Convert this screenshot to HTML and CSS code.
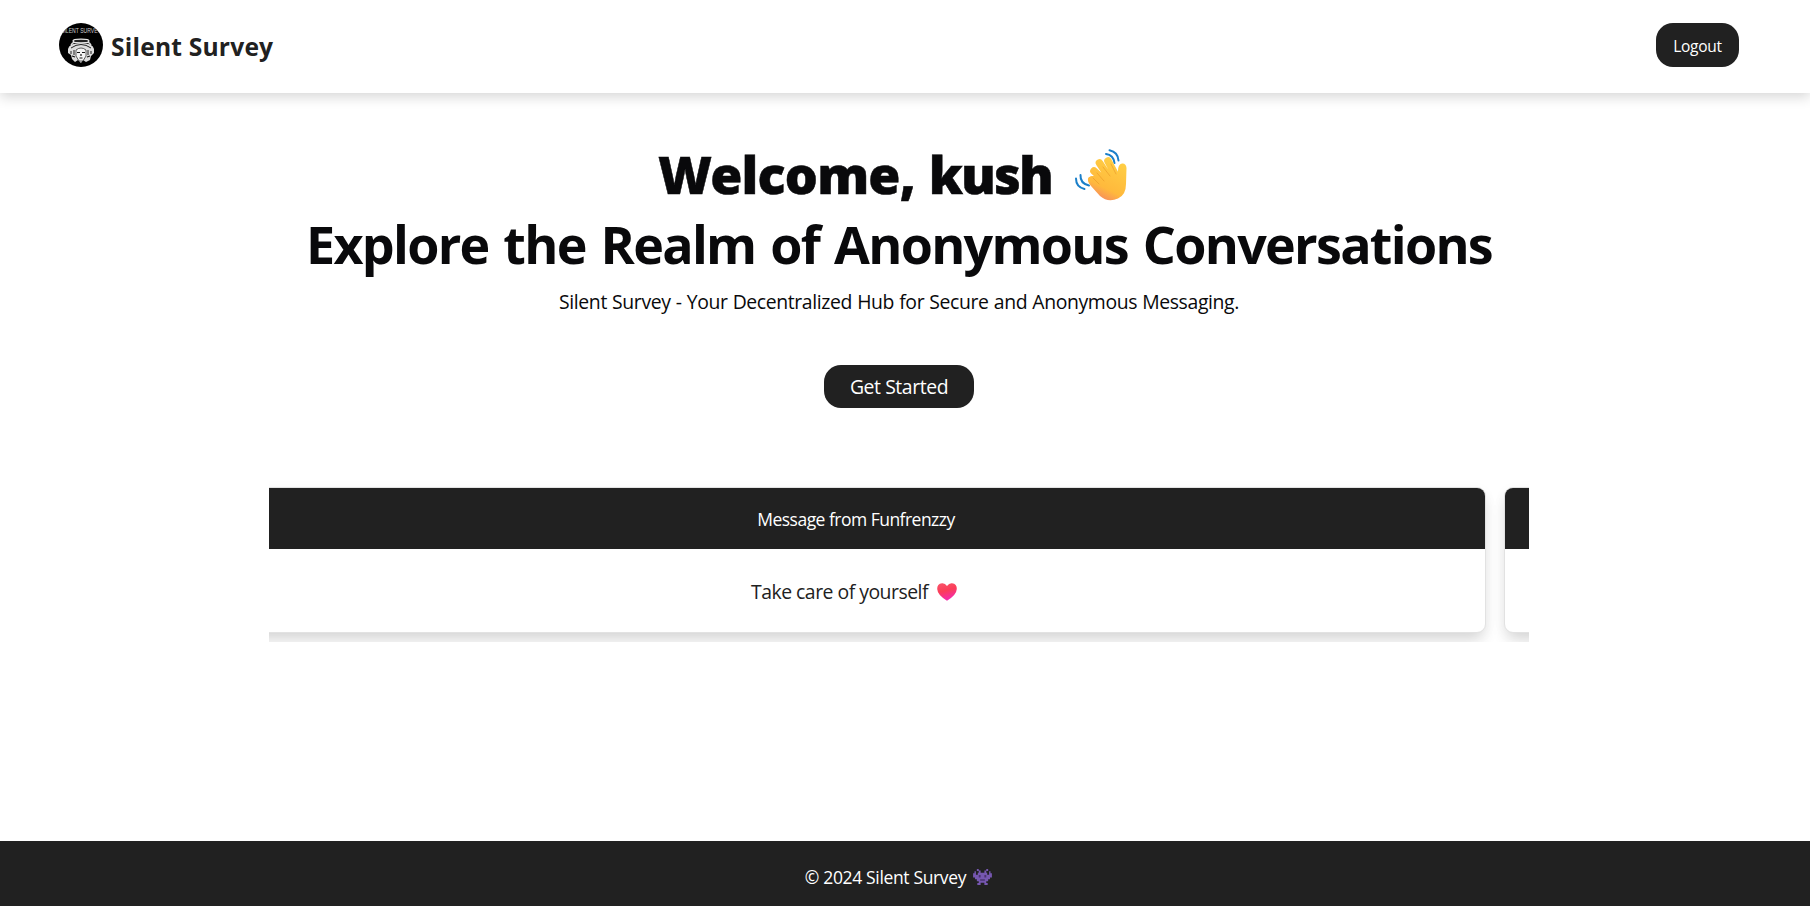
FILE: index.html
```html
<!DOCTYPE html>
<html lang="en">
<head>
<meta charset="utf-8">
<title>Silent Survey</title>
<link rel="stylesheet" href="styles.css">
</head>
<body>
<header class="navbar">
  <a class="brand">
    <svg class="logo" viewBox="0 0 44 44">
      <defs><clipPath id="disc"><circle cx="22" cy="22" r="22"/></clipPath></defs>
      <g clip-path="url(#disc)">
        <rect width="44" height="44" fill="#000"/>
        <text class="logo-text" x="2" y="9.500" textLength="40" lengthAdjust="spacingAndGlyphs">SILENT SURVEY</text>
        <path d="M12 22Q14 18 22 18T32 22" fill="none" stroke="#ddd" stroke-width="1.400"/>
        <ellipse cx="22" cy="18" rx="8" ry="1.800" fill="#222" stroke="#eee" stroke-width="1.200"/>
        <path d="M9 26Q10 20 22 20T35 26L35 30 32 33 31 37 27 39 24 37 22 40 19 37 16 39 13 36 12 32 9 30Z" fill="#ddd"/>
        <path d="M12 25Q22 18 32 25M12 28V31M32 28V31M15 27V32M29 27V32" fill="none" stroke="#222" stroke-width="1"/>
        <path d="M17 27Q22 23 27 27L27 33 24 38H20L17 33Z" fill="#f4f4f4" stroke="#222" stroke-width=".7"/>
        <path d="M18 29.500H21M23 29.500H26M20.500 35H23.500M22 31V33M13 33 16 34M31 33 28 34" stroke="#111" stroke-width="1.200"/>
      </g>
    </svg>
    <span class="brand-name">Silent Survey</span>
  </a>
  <button class="btn btn-logout">Logout</button>
</header>
<main class="main">
  <h1 class="welcome"><span class="welcome-text">Welcome, <span class="user">kush</span></span>
    <svg class="wave" viewBox="0 0 52 52">
      <defs><linearGradient id="hand" gradientUnits="userSpaceOnUse" x1="42" y1="10" x2="22" y2="50"><stop offset="0" stop-color="#ffcf45"/><stop offset=".7" stop-color="#ffb93c"/><stop offset="1" stop-color="#f68762"/></linearGradient></defs>
      <g fill="none" stroke="#1b7fc9" stroke-width="2" stroke-linecap="round"><path d="M34.500 1.200Q43 3 43.500 11.500M31 5Q38.500 6 39.500 14M5.500 26Q5 34.500 14 36.500M1 29.500Q1 38 9.500 40"/></g>
      <g fill="none" stroke="url(#hand)" stroke-width="7.600" stroke-linecap="round"><path d="M17 31 28 40M19 22 32 34M24.500 14 35 30M33 12 41 27"/></g>
      <path d="M14 28Q11 31 16 37L25 47Q33 54 43 49.500Q51 46 51 35L51.500 19Q51 14 47 14.500Q43 15 43 22Q43 26 41 26L28 25Z" fill="url(#hand)"/>
      <path d="M18 29 24 35M22 24 29 32M28 18 35 27M36 15 41 25" fill="none" stroke="#e99a28" stroke-width="1" opacity=".65" stroke-linecap="round"/>
    </svg>
  </h1>
  <h2 class="headline">Explore the Realm of Anonymous Conversations</h2>
  <p class="tagline">Silent Survey - Your Decentralized Hub for Secure and Anonymous Messaging.</p>
  <button class="btn btn-start">Get Started</button>
  <section class="carousel">
    <div class="track">
      <article class="card">
        <div class="card-head"><span>Message from Funfrenzzy</span></div>
        <div class="card-body"><span>Take care of yourself</span>
          <svg class="heart" viewBox="0 0 20 18"><defs><linearGradient id="love" x1="0" y1="0" x2=".3" y2="1"><stop offset="0" stop-color="#f9566b"/><stop offset=".5" stop-color="#fb3d58"/><stop offset="1" stop-color="#f52bab"/></linearGradient></defs><path d="M10 3Q12 0 15 .3Q20 1 19.800 6Q19.500 12 10 17.700Q.5 12 .2 6Q0 1 5 .3Q8 0 10 3Z" fill="url(#love)"/></svg>
        </div>
      </article>
      <article class="card"><div class="card-head"></div><div class="card-body"></div></article>
    </div>
  </section>
</main>
<footer class="footer">
  <span>© 2024 Silent Survey</span>
  <svg class="alien" viewBox="0 0 20 17"><path d="M4 0H6V1.500H8V4H12V1.500H14V0H16V2H14V4H15V6H17V2.500H18.500V4.500H20V9H18V11H16V13H14V15H15.500V17H12V14.500H8V17H4.500V15H6V13H4V11H2V9H0V4.500H1.500V2.500H3V6H5V4H6V2H4Z" fill="#7657b0"/><path d="M6 6.500H8V9H6ZM12 6.500H14V9H12ZM7.500 11H12.500V12.500H7.500Z" fill="#4a3470"/></svg>
</footer>
</body>
</html>
```
FILE: styles.css
```css
* { box-sizing: border-box; }
body {
  margin: 0;
  min-height: 906px;
  display: flex;
  flex-direction: column;
  background: #fff;
  color: #09090b;
  font-family: "Open Sans", "Noto Sans", sans-serif;
  overflow: hidden;
}
.navbar {
  height: 93px;
  padding: 0 71px 3px 59px;
  display: flex;
  align-items: center;
  justify-content: space-between;
  box-shadow: 0 4px 12px rgba(0,0,0,.16);
}
.brand { display: flex; align-items: center; gap: 8px; }
.logo { width: 44px; height: 44px; }
.logo-text { font: 7px "Liberation Sans", sans-serif; fill: #ccc; }
.brand-name { font-size: 24.6px; font-weight: 700; letter-spacing: .2px; color: #212121; line-height: 32px; padding-top: 3px; white-space: nowrap; }
.btn {
  border: 0;
  border-radius: 17px;
  background: #212121;
  color: #fff;
  font-family: inherit;
  padding: 0;
  white-space: nowrap;
}
.btn-logout { width: 83px; height: 44px; padding-top: 2px; font-size: 15.5px; line-height: 42px; letter-spacing: -.25px; }
.main { flex: 1; display: flex; flex-direction: column; align-items: center; padding: 46px 12px 0 0; }
.welcome {
  margin: 0;
  height: 70px;
  padding-right: 13px;
  display: flex;
  align-items: center;
  gap: 23px;
  font: 900 52px/70px "Noto Sans", sans-serif;
  letter-spacing: -.8px;
  word-spacing: 1px;
  white-space: nowrap;
  -webkit-text-stroke: .5px #09090b;
}
.user { letter-spacing: -1.9px; }
.wave { width: 52px; height: 52px; margin-top: 2px; }
.headline { margin: 0; font-size: 52px; font-weight: 700; line-height: 70px; letter-spacing: -1.7px; word-spacing: 3px; white-space: nowrap; }
.tagline { margin: 0; font-size: 19.4px; line-height: 45px; letter-spacing: -.38px; word-spacing: .5px; white-space: nowrap; }
.btn-start { margin-top: 41px; width: 150px; height: 43px; font-size: 19.4px; line-height: 43px; letter-spacing: -.42px; }
.carousel { width: 1260px; margin-top: 69px; padding: 10px 0 9px; overflow: hidden; }
.track { display: flex; gap: 18px; margin-left: -43px; }
.card {
  flex: 0 0 1260px;
  height: 146px;
  border: 1px solid #e2e2e2;
  border-radius: 9px;
  background: #fff;
  box-shadow: 0 10px 15px -3px rgba(0,0,0,.14), 0 3px 14px rgba(0,0,0,.04);
  text-align: center;
}
.card-head { height: 61px; border-radius: 8px 8px 0 0; background: #212121; color: #fff; font-size: 17.5px; line-height: 62px; letter-spacing: -.52px; }
.card-body { height: 83px; display: flex; align-items: center; justify-content: center; gap: 9px; padding: 2px 4px 0 0; font-size: 19.4px; letter-spacing: -.5px; color: #212121; }
.heart { width: 20px; height: 18px; }
.footer { height: 65px; padding: 7px 13px 0 0; display: flex; align-items: center; justify-content: center; gap: 7px; background: #212121; color: #fff; font-size: 17.5px; letter-spacing: -.35px; }
.alien { width: 19px; height: 16px; }
```
